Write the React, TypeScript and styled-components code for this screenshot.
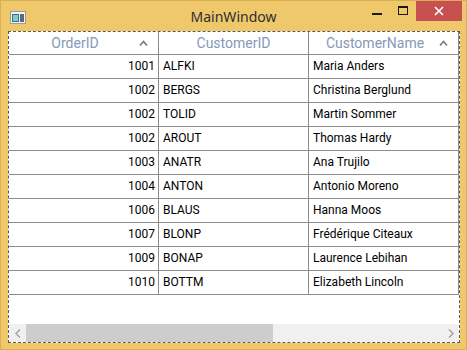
import React from "react";
import styled, { createGlobalStyle } from "styled-components";

const Global = createGlobalStyle`
  html, body { margin: 0; padding: 0; background: #efc76c; }
  * { box-sizing: border-box; }
`;

const Window = styled.div`
  width: 467px;
  height: 350px;
  background: #f0c86c;
  border: 1px solid #d9ae55;
  display: flex;
  flex-direction: column;
  font-family: "Roboto", "Noto Sans", sans-serif;
  overflow: hidden;
`;

const TitleBar = styled.div`
  height: 30px;
  display: flex;
  align-items: flex-start;
  position: relative;
  flex: none;
`;

const AppIcon = styled.div`
  margin: 8px 0 0 9px;
  width: 16px;
  height: 13px;
`;

const Title = styled.div`
  position: absolute;
  left: 0;
  right: 0;
  top: 6px;
  text-align: center;
  font-family: "Noto Sans", sans-serif;
  font-size: 14px;
  color: #2f2f2f;
  pointer-events: none;
`;

const Controls = styled.div`
  margin-left: auto;
  display: flex;
  align-items: flex-start;
  margin-right: 4px;
`;

const CtrlButton = styled.div<{ $close?: boolean }>`
  width: ${(p) => (p.$close ? "46px" : "26px")};
  height: 20px;
  display: flex;
  align-items: center;
  justify-content: center;
  background: ${(p) => (p.$close ? "#c75050" : "transparent")};
`;

const Client = styled.div`
  flex: 1;
  margin: 0 6px 6px 7px;
  border: 1px dashed #5a5a5a;
  background: #fff;
  display: flex;
  flex-direction: column;
  overflow: hidden;
`;

const GridArea = styled.div`
  flex: 1;
  overflow: hidden;
`;

const Row = styled.div<{ $header?: boolean }>`
  display: flex;
  height: ${(p) => (p.$header ? "23px" : "24px")};
  border-bottom: 1px solid #8c8c8c;
  width: 760px;
`;

const Cell = styled.div<{ $w: number; $right?: boolean }>`
  flex: none;
  width: ${(p) => p.$w}px;
  border-right: 1px solid #8c8c8c;
  font-size: 12px;
  color: #000;
  display: flex;
  align-items: center;
  justify-content: ${(p) => (p.$right ? "flex-end" : "flex-start")};
  padding: 0 3px 1px 4px;
  white-space: nowrap;
`;

const HeaderCell = styled.div<{ $w: number }>`
  flex: none;
  width: ${(p) => p.$w}px;
  border-right: 1px solid #8c8c8c;
  display: flex;
  align-items: center;
  position: relative;
`;

const HeaderText = styled.div<{ $arrow?: boolean }>`
  flex: 1;
  text-align: center;
  font-size: 14px;
  color: #8599b9;
  padding-right: ${(p) => (p.$arrow ? "17px" : "0")};
`;

const SortArrow = styled.svg`
  position: absolute;
  right: 10px;
  top: 8px;
`;

const ScrollBar = styled.div`
  height: 18px;
  flex: none;
  display: flex;
  background: #f0f0f0;
`;

const ScrollBtn = styled.div`
  width: 17px;
  display: flex;
  align-items: center;
  justify-content: center;
  flex: none;
`;

const Track = styled.div`
  flex: 1;
  display: flex;
`;

const Thumb = styled.div`
  background: #cdcdcd;
  height: 100%;
`;

const data = [
  ["1001", "ALFKI", "Maria Anders"],
  ["1002", "BERGS", "Christina Berglund"],
  ["1002", "TOLID", "Martin Sommer"],
  ["1002", "AROUT", "Thomas Hardy"],
  ["1003", "ANATR", "Ana Trujilo"],
  ["1004", "ANTON", "Antonio Moreno"],
  ["1006", "BLAUS", "Hanna Moos"],
  ["1007", "BLONP", "Frédérique Citeaux"],
  ["1009", "BONAP", "Laurence Lebihan"],
  ["1010", "BOTTM", "Elizabeth Lincoln"],
];

const Arrow = () => (
  <SortArrow width="9" height="6" viewBox="0 0 9 6">
    <path d="M1 5.5 L4.5 1.5 L8 5.5" fill="none" stroke="#7a7a7a" strokeWidth="1.6" />
  </SortArrow>
);

export default function App() {
  return (
    <>
      <Global />
      <Window>
        <TitleBar>
          <AppIcon>
            <svg width="16" height="13" viewBox="0 0 16 13">
              <rect x="0.5" y="0.5" width="15" height="12" fill="#f4f4f4" stroke="#9a9a9a" />
              <rect x="2" y="3" width="7" height="8" fill="#2b7a8c" />
              <rect x="3" y="4" width="5" height="6" fill="#8cc6c8" />
              <rect x="10" y="3" width="4" height="8" fill="#5a6a7a" />
            </svg>
          </AppIcon>
          <Title>MainWindow</Title>
          <Controls>
            <CtrlButton>
              <svg width="10" height="10" viewBox="0 0 10 10">
                <rect x="0" y="7" width="10" height="2" fill="#1a1a1a" />
              </svg>
            </CtrlButton>
            <CtrlButton>
              <svg width="10" height="10" viewBox="0 0 10 10">
                <rect x="0.5" y="0.5" width="9" height="8" fill="none" stroke="#1a1a1a" />
                <rect x="0" y="0" width="10" height="2" fill="#1a1a1a" />
              </svg>
            </CtrlButton>
            <CtrlButton $close>
              <svg width="10" height="10" viewBox="0 0 10 10">
                <path d="M1 1 L9 9 M9 1 L1 9" stroke="#fff" strokeWidth="1.6" />
              </svg>
            </CtrlButton>
          </Controls>
        </TitleBar>
        <Client>
          <GridArea>
            <Row $header>
              <HeaderCell $w={150}>
                <HeaderText $arrow>OrderID</HeaderText>
                <Arrow />
              </HeaderCell>
              <HeaderCell $w={150}>
                <HeaderText>CustomerID</HeaderText>
              </HeaderCell>
              <HeaderCell $w={150}>
                <HeaderText $arrow>CustomerName</HeaderText>
                <Arrow />
              </HeaderCell>
              <HeaderCell $w={150} />
            </Row>
            {data.map((r, i) => (
              <Row key={i}>
                <Cell $w={150} $right>
                  {r[0]}
                </Cell>
                <Cell $w={150}>{r[1]}</Cell>
                <Cell $w={150}>{r[2]}</Cell>
                <Cell $w={150}></Cell>
              </Row>
            ))}
          </GridArea>
          <ScrollBar>
            <ScrollBtn>
              <svg width="6" height="9" viewBox="0 0 6 9">
                <path d="M5 0.5 L1 4.5 L5 8.5" fill="none" stroke="#a0a0a0" strokeWidth="1.4" />
              </svg>
            </ScrollBtn>
            <Track>
              <Thumb style={{ width: "247px" }} />
            </Track>
            <ScrollBtn>
              <svg width="6" height="9" viewBox="0 0 6 9">
                <path d="M1 0.5 L5 4.5 L1 8.5" fill="none" stroke="#a0a0a0" strokeWidth="1.4" />
              </svg>
            </ScrollBtn>
          </ScrollBar>
        </Client>
      </Window>
    </>
  );
}
